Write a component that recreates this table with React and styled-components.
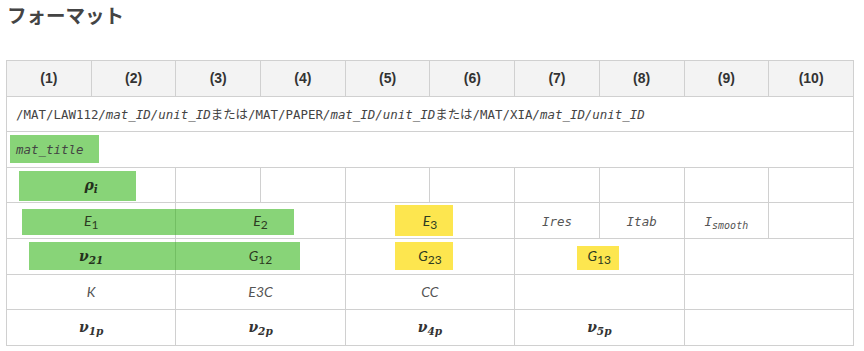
import React from 'react'
import styled, { createGlobalStyle } from 'styled-components'

const vars = {
  text: '#444',
  head: '#333',
  border: '#d0d0d0',
  headBg: '#f3f3f3',
  green: 'rgba(39, 177, 10, 0.55)',
  yellow: '#fde64f',
  mono: '"DejaVu Sans Mono", "Liberation Mono", "Noto Sans CJK JP", monospace',
  sans: 'Lato, "Liberation Sans", sans-serif',
  serif: '"DejaVu Serif", "Liberation Serif", serif',
}

const GlobalStyle = createGlobalStyle`
  body {
    margin: 0;
    background: #fff;
    font-family: "Liberation Sans", Arial, sans-serif;
    color: ${vars.text};
  }
`

const Page = styled.div`
  padding: 0 6px;
`

const Title = styled.h2`
  margin: 0 0 30px 1px;
  font-family: "Noto Sans CJK JP", sans-serif;
  font-size: 19.5px;
  font-weight: 700;
  line-height: 30px;
  color: ${vars.text};
`

const Table = styled.table`
  width: 848px;
  border-collapse: collapse;
  table-layout: fixed;

  tr {
    height: 35.6px;
  }
`

const Th = styled.th`
  background: ${vars.headBg};
  border: 1px solid ${vars.border};
  font-size: 14px;
  font-weight: 700;
  color: ${vars.head};
  text-align: center;
  padding: 0;
`

const Td = styled.td`
  position: relative;
  border: 1px solid ${vars.border};
  padding: 0 ${p => (p.$left ? '9px' : '0')};
  text-align: ${p => (p.$left ? 'left' : 'center')};
  vertical-align: middle;
`

const Mark = styled.div`
  position: absolute;
  z-index: 0;
  left: ${p => p.$x}px;
  top: ${p => p.$y}px;
  width: ${p => p.$w}px;
  height: ${p => p.$h}px;
  background: ${p => (p.$yellow ? vars.yellow : vars.green)};
`

const Label = styled.span`
  position: relative;
  z-index: 1;
  white-space: nowrap;
`

const Mono = styled(Label)`
  font-family: ${vars.mono};
  font-size: 12.45px;
  color: ${vars.text};

  i {
    font-style: italic;
  }
`

const Sym = styled(Label)`
  font-family: ${vars.sans};
  font-style: italic;
  font-size: 14px;
  color: ${p => (p.$onMark ? '#2d3b22' : '#555')};

  sub {
    font-style: normal;
    font-size: 12px;
    vertical-align: -3px;
    line-height: 0;
  }
`

const MonoSym = styled(Label)`
  font-family: ${vars.mono};
  font-style: italic;
  font-size: 12.5px;
  color: #555;

  sub {
    font-size: 10px;
    vertical-align: -3px;
    line-height: 0;
  }
`

const MathSym = styled(Label)`
  font-family: ${vars.serif};
  font-style: italic;
  font-weight: 700;
  font-size: 14px;
  color: ${p => (p.$onMark ? '#24301c' : '#333')};

  sub {
    font-size: 10.5px;
    vertical-align: -3px;
    line-height: 0;
  }
`

const Empty = () => <Td />

const App = () => {
  return (
    <Page>
      <GlobalStyle />
      <Title>フォーマット</Title>
      <Table>
        <thead>
          <tr>
            {Array.from({ length: 10 }, (_, i) => (
              <Th key={i}>({i + 1})</Th>
            ))}
          </tr>
        </thead>
        <tbody>
          <tr>
            <Td colSpan={10} $left>
              <Mono>
                /MAT/LAW112<i>/mat_ID/unit_ID</i>または/MAT/PAPER<i>/mat_ID/unit_ID</i>または/MAT/XIA<i>/mat_ID/unit_ID</i>
              </Mono>
            </Td>
          </tr>
          <tr>
            <Td colSpan={10} $left>
              <Mark $x={3} $y={3} $w={89} $h={28} />
              <Mono><i>mat_title</i></Mono>
            </Td>
          </tr>
          <tr>
            <Td colSpan={2}>
              <Mark $x={12} $y={3} $w={117} $h={30} />
              <MathSym $onMark>ρ<sub>i</sub></MathSym>
            </Td>
            {Array.from({ length: 8 }, (_, i) => <Empty key={i} />)}
          </tr>
          <tr>
            <Td colSpan={2}>
              <Mark $x={15} $y={6} $w={272} $h={26} />
              <Sym $onMark>E<sub>1</sub></Sym>
            </Td>
            <Td colSpan={2}>
              <Sym $onMark>E<sub>2</sub></Sym>
            </Td>
            <Td colSpan={2}>
              <Mark $yellow $x={49} $y={2} $w={58} $h={31} />
              <Sym $onMark>E<sub>3</sub></Sym>
            </Td>
            <Td><MonoSym>Ires</MonoSym></Td>
            <Td><MonoSym>Itab</MonoSym></Td>
            <Td><MonoSym>I<sub>smooth</sub></MonoSym></Td>
            <Empty />
          </tr>
          <tr>
            <Td colSpan={2}>
              <Mark $x={22} $y={3} $w={271} $h={28} />
              <MathSym $onMark>ν<sub>21</sub></MathSym>
            </Td>
            <Td colSpan={2}>
              <Sym $onMark>G<sub>12</sub></Sym>
            </Td>
            <Td colSpan={2}>
              <Mark $yellow $x={49} $y={3} $w={58} $h={28} />
              <Sym $onMark>G<sub>23</sub></Sym>
            </Td>
            <Td colSpan={2}>
              <Mark $yellow $x={62} $y={7} $w={42} $h={24} />
              <Sym $onMark>G<sub>13</sub></Sym>
            </Td>
            <Td colSpan={2} />
          </tr>
          <tr>
            <Td colSpan={2}><Sym>K</Sym></Td>
            <Td colSpan={2}><Sym>E3C</Sym></Td>
            <Td colSpan={2}><Sym>CC</Sym></Td>
            <Td colSpan={2} />
            <Td colSpan={2} />
          </tr>
          <tr>
            <Td colSpan={2}><MathSym>ν<sub>1p</sub></MathSym></Td>
            <Td colSpan={2}><MathSym>ν<sub>2p</sub></MathSym></Td>
            <Td colSpan={2}><MathSym>ν<sub>4p</sub></MathSym></Td>
            <Td colSpan={2}><MathSym>ν<sub>5p</sub></MathSym></Td>
            <Td colSpan={2} />
          </tr>
        </tbody>
      </Table>
    </Page>
  )
}

export default App
